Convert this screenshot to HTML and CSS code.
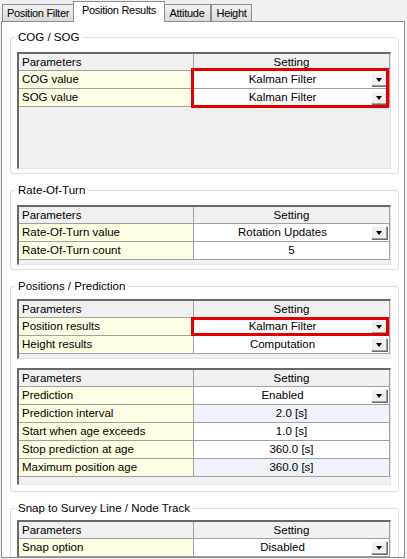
FILE: index.html
```html
<!DOCTYPE html>
<html lang="en">
<head>
    <meta charset="UTF-8">
    <title>Position Results</title>
    <link rel="stylesheet" href="styles.css">
</head>
<body>
    <div class="tabs">
        <div class="tab tab-filter">Position Filter</div>
        <div class="tab active">Position Results</div>
        <div class="tab tab-attitude">Attitude</div>
        <div class="tab tab-height">Height</div>
    </div>
    <div class="panel">
        <fieldset class="group group-cog">
            <legend>COG / SOG</legend>
            <div class="grid tall">
                <div class="row head"><div class="param">Parameters</div><div class="value">Setting</div></div>
                <div class="row"><div class="param">COG value</div><div class="value combo"><span>Kalman Filter</span><i class="drop"></i></div></div>
                <div class="row"><div class="param">SOG value</div><div class="value combo"><span>Kalman Filter</span><i class="drop"></i></div></div>
                <div class="mark mark-cog"></div>
            </div>
        </fieldset>

        <fieldset class="group group-rot">
            <legend>Rate-Of-Turn</legend>
            <div class="grid short">
                <div class="row head"><div class="param">Parameters</div><div class="value">Setting</div></div>
                <div class="row"><div class="param">Rate-Of-Turn value</div><div class="value combo"><span>Rotation Updates</span><i class="drop"></i></div></div>
                <div class="row"><div class="param">Rate-Of-Turn count</div><div class="value">5</div></div>
            </div>
        </fieldset>

        <fieldset class="group group-pos">
            <legend>Positions / Prediction</legend>
            <div class="grid short">
                <div class="row head"><div class="param">Parameters</div><div class="value">Setting</div></div>
                <div class="row"><div class="param">Position results</div><div class="value combo"><span>Kalman Filter</span><i class="drop"></i></div></div>
                <div class="row"><div class="param">Height results</div><div class="value combo"><span>Computation</span><i class="drop"></i></div></div>
                <div class="mark mark-pos"></div>
            </div>
            <div class="grid tall">
                <div class="row head"><div class="param">Parameters</div><div class="value">Setting</div></div>
                <div class="row"><div class="param">Prediction</div><div class="value combo"><span>Enabled</span><i class="drop"></i></div></div>
                <div class="row"><div class="param">Prediction interval</div><div class="value shaded">2.0 [s]</div></div>
                <div class="row"><div class="param">Start when age exceeds</div><div class="value">1.0 [s]</div></div>
                <div class="row"><div class="param">Stop prediction at age</div><div class="value">360.0 [s]</div></div>
                <div class="row"><div class="param">Maximum position age</div><div class="value shaded">360.0 [s]</div></div>
            </div>
        </fieldset>

        <fieldset class="group group-snap">
            <legend>Snap to Survey Line / Node Track</legend>
            <div class="grid short">
                <div class="row head"><div class="param">Parameters</div><div class="value">Setting</div></div>
                <div class="row"><div class="param">Snap option</div><div class="value combo"><span>Disabled</span><i class="drop"></i></div></div>
            </div>
        </fieldset>
    </div>
</body>
</html>
```

FILE: styles.css
```css
body {
    margin: 0;
    background: #f0f0f0;
    font-family: "Liberation Sans", Arial, sans-serif;
    font-size: 11.5px;
    color: #000;
}

/* tab strip */
.tabs {
    display: flex;
    align-items: flex-end;
    height: 21px;
    padding-left: 2px;
}

.tab {
    box-sizing: border-box;
    height: 17px;
    line-height: 16px;
    border: 1px solid #898c95;
    border-bottom: none;
    background: linear-gradient(#f3f3f3, #e6e6e6 50%, #dadada);
    font-size: 11px;
    letter-spacing: -0.3px;
    text-align: center;
    white-space: nowrap;
}

.tab-filter { width: 72px; }
.tab-attitude { width: 47px; border-left: none; }
.tab-height { width: 41px; }

.tab.active {
    position: relative;
    z-index: 1;
    width: 92px;
    height: 21px;
    margin: 0 -1px -1px -1px;
    line-height: 17px;
    background: #fff;
}

/* tab page */
.panel {
    box-sizing: border-box;
    width: 404px;
    height: 537px;
    margin-left: 1px;
    border: 1px solid #898c95;
    background: #fff;
    overflow: hidden;
}

.group {
    margin: 0 5px 9px 8px;
    padding: 8px 7px 4px 6px;
    border: 1px solid #d5dfe5;
    border-radius: 3px;
}

.group-cog { margin-top: 8px; }
.group-pos { padding-top: 6px; padding-bottom: 6px; }
.group-snap { padding-top: 5px; }

.group legend {
    margin-left: -2px;
    padding: 0 3px;
    line-height: 14px;
}

/* data grid */
.grid {
    position: relative;
    box-sizing: border-box;
    width: 374px;
    border-top: 2px solid #696969;
    border-left: 2px solid #696969;
    border-right: 1px solid #e3e3e3;
    border-bottom: 1px solid #e3e3e3;
    background: #f0f0f0;
}

.grid.tall { height: 117px; }
.grid.short { height: 60px; }
.grid + .grid { margin-top: 9px; }

.row {
    display: grid;
    grid-template-columns: 175px 196px;
    height: 18px;
}

.row.head { height: 17px; }

.param, .value {
    box-sizing: border-box;
    border-right: 1px solid #a0a0a0;
    border-bottom: 1px solid #a0a0a0;
    line-height: 17px;
    white-space: nowrap;
}

.param {
    padding-left: 3px;
    background: #fffde4;
}

.value {
    text-align: center;
    background: #fff;
}

.value.shaded { background: #eef3fa; }

.head .param, .head .value {
    line-height: 16px;
    background: #f0f0f0;
}

.combo {
    display: flex;
    align-items: center;
}

.combo span { flex: 1; }

.drop {
    box-sizing: border-box;
    display: flex;
    align-items: center;
    justify-content: center;
    width: 16px;
    height: 13px;
    margin-right: 2px;
    border: 1px solid;
    border-color: #fff #a0a0a0 #a0a0a0 #fff;
    box-shadow: 1px 1px 0 #696969;
    background: #f0f0f0;
}

.drop::before {
    content: "";
    border-top: 4px solid #000;
    border-left: 3.5px solid transparent;
    border-right: 3.5px solid transparent;
}

/* red highlight annotations */
.mark {
    position: absolute;
    left: 172px;
    width: 198px;
    box-sizing: border-box;
    border: 3px solid #e00000;
}

.mark-cog { top: 14px; height: 40px; }
.mark-pos { top: 16px; height: 19px; }
```
